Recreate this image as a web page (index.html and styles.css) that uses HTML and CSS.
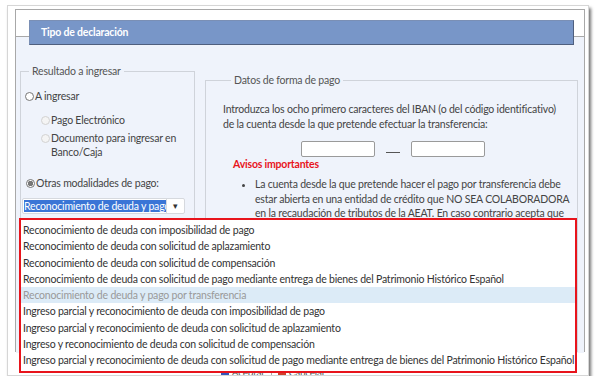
FILE: index.html
```html
<!DOCTYPE html>
<html lang="es">
<head>
    <meta charset="UTF-8">
    <meta name="viewport" content="width=device-width, initial-scale=1.0">
    <title>Tipo de declaración</title>
    <link rel="stylesheet" href="styles.css">
</head>
<body>

    <div class="window">
        <div class="frame">
            <div class="header_bar">Tipo de declaración</div>

            <div class="content">
                <!-- Resultado -->
                <fieldset class="box box-left">
                    <legend>Resultado a ingresar</legend>

                    <label class="opt opt-first"><span class="radio"></span>A ingresar</label>
                    <label class="opt opt-sub opt-pago"><span class="radio radio-off"></span>Pago Electrónico</label>
                    <label class="opt opt-sub opt-doc"><span class="radio radio-off"></span>Documento para ingresar en Banco/Caja</label>
                    <label class="opt opt-otras"><span class="radio radio-on"></span>Otras modalidades de pago:</label>

                    <div class="select">
                        <span class="select-text"><span class="sel-hl">Reconocimiento de deuda y pago por transferencia</span></span>
                        <span class="select-btn">&#9662;</span>
                    </div>
                </fieldset>

                <!-- Forma de pago -->
                <fieldset class="box box-right">
                    <legend>Datos de forma de pago</legend>

                    <p class="intro">Introduzca los ocho primero caracteres del IBAN (o del código identificativo) de la cuenta desde la que pretende efectuar la transferencia:</p>

                    <div class="iban-row">
                        <span class="iban-input"></span>
                        <span class="iban-dash"></span>
                        <span class="iban-input"></span>
                    </div>

                    <h4 class="avisos">Avisos importantes</h4>
                    <ul class="avisos-list">
                        <li>La cuenta desde la que pretende hacer el pago por transferencia debe<br>
                            estar abierta en una entidad de crédito que NO SEA COLABORADORA<br>
                            en la recaudación de tributos de la AEAT. En caso contrario acepta que<br>
                            el pago se realice mediante adeudo en cuenta.</li>
                    </ul>
                </fieldset>
            </div>
        </div>

        <div class="footer">
            <span class="btn"><span class="btn-icon icon-ok"></span>Aceptar</span>
            <span class="btn-sep"></span>
            <span class="btn"><span class="btn-icon icon-cancel"></span>Cancelar</span>
        </div>

        <!-- opened list of the select -->
        <ul class="dropdown">
            <li>Reconocimiento de deuda con imposibilidad de pago</li>
            <li>Reconocimiento de deuda con solicitud de aplazamiento</li>
            <li>Reconocimiento de deuda con solicitud de compensación</li>
            <li>Reconocimiento de deuda con solicitud de pago mediante entrega de bienes del Patrimonio Histórico Español</li>
            <li class="current">Reconocimiento de deuda y pago por transferencia</li>
            <li>Ingreso parcial y reconocimiento de deuda con imposibilidad de pago</li>
            <li>Ingreso parcial y reconocimiento de deuda con solicitud de aplazamiento</li>
            <li>Ingreso y reconocimiento de deuda con solicitud de compensación</li>
            <li>Ingreso parcial y reconocimiento de deuda con solicitud de pago mediante entrega de bienes del Patrimonio Histórico Español</li>
        </ul>
    </div>

</body>
</html>
```

FILE: styles.css
```css
body {
    margin: 0;
    background-color: #fff;
    font-family: 'Lato', 'Open Sans', sans-serif;
    font-size: 10.5px;
    letter-spacing: -0.2px;
    color: #444;
}

.window {
    position: relative;
    width: 580px;
    height: 369px;
    margin: 5px 0 0 7px;
    border: 1px solid #d6d6d6;
    background-color: #fff;
    box-shadow: 2px 3px 3px rgba(0, 0, 0, 0.55);
    overflow: hidden;
}

.frame {
    margin: 3px 3px 0 7px;
    height: 343px;
    border: 1px solid #a8a8a8;
    background-color: #fff;
    padding-top: 10px;
    box-sizing: border-box;
}

.header_bar {
    position: relative;
    z-index: 1;
    height: 25px;
    margin: 0 10px -9px 13px;
    padding-left: 11px;
    box-sizing: border-box;
    background-color: #7896c8;
    border: 1px solid #7a8fb5;
    border-right-color: #4f5f7e;
    border-bottom-color: #4f5f7e;
    color: #fff;
    font-weight: bold;
    line-height: 23px;
}

.content {
    display: grid;
    grid-template-columns: 175px 373px;
    column-gap: 10px;
    align-items: start;
    height: 316px;
    padding: 0 0 0 4px;
    border-top: 1px solid #a8a8a8;
    background-color: #eff3fb;
}

/* fieldsets */
.box {
    margin: 0;
    padding: 0;
    border: 1px solid #cfd3da;
    min-width: 0;
}

.box legend {
    padding: 0 3px;
    margin-left: 8px;
    line-height: 16px;
    color: #555;
}

.box-left {
    margin-top: 26px;
    height: 282px;
    box-sizing: border-box;
}

.box-right {
    margin-top: 35px;
    height: 280px;
    box-sizing: border-box;
    padding: 0 8px 0 17px;
}

/* radios */
.opt {
    display: flex;
    align-items: flex-start;
    line-height: 16px;
    color: #444;
}

.radio {
    flex: none;
    width: 7px;
    height: 7px;
    margin: 4px 1px 0 0;
    border: 1px solid #777;
    border-radius: 50%;
    background-color: #fff;
}

.radio-off {
    border-color: #d2d2d2;
    background-color: #f4f4f4;
}

.radio-on {
    background: radial-gradient(circle, #777 0 2.5px, #fff 3px);
}

.opt-first {
    margin: 9px 0 0 4px;
}

.opt-sub {
    margin-left: 20px;
}

.opt-pago {
    margin-top: 8px;
}

.opt-doc {
    margin-top: 3px;
    line-height: 14px;
    width: 140px;
}

.opt-doc .radio {
    margin-top: 3px;
}

.opt-otras {
    margin: 16px 0 0 5px;
}

.select {
    display: flex;
    height: 16px;
    margin: 7px 0 0 1px;
    width: 163px;
    border: 1px solid #d6d9de;
    border-radius: 2px;
    background-color: #fff;
    box-sizing: border-box;
    overflow: hidden;
}

.select-text {
    flex: 1;
    overflow: hidden;
    white-space: nowrap;
    padding-left: 1px;
    line-height: 14px;
}

.sel-hl {
    background-color: #3a75d6;
    color: #fff;
}

.select-btn {
    flex: none;
    width: 17px;
    border-left: 1px solid #d6d9de;
    text-align: center;
    font-size: 9px;
    line-height: 14px;
    color: #333;
}

/* right column */
.intro {
    margin: 14px 0 0;
    line-height: 15px;
    color: #444;
}

.iban-row {
    display: flex;
    justify-content: center;
    align-items: flex-end;
    gap: 11px;
    margin-top: 9px;
    padding-right: 6px;
}

.iban-input {
    width: 74px;
    height: 16px;
    box-sizing: border-box;
    border: 1px solid #9a9a9a;
    border-radius: 2px;
    background-color: #fff;
}

.iban-dash {
    width: 14px;
    margin-bottom: 4px;
    border-bottom: 1px solid #555;
}

.avisos {
    margin: 0 0 0 10px;
    line-height: 14px;
    font-size: 10.5px;
    color: #e8141c;
}

.avisos-list {
    margin: 6px 0 0;
    padding-left: 32px;
    line-height: 14.5px;
    white-space: nowrap;
    color: #444;
}

/* footer buttons (mostly covered by the open list) */
.footer {
    display: flex;
    justify-content: center;
    align-items: center;
    gap: 6px;
    padding-top: 14px;
    padding-right: 50px;
    font-size: 10px;
    color: #555;
}

.btn {
    display: flex;
    align-items: center;
    gap: 3px;
}

.btn-icon {
    width: 8px;
    height: 8px;
}

.icon-ok {
    background-color: #3656b8;
}

.icon-cancel {
    background-color: #d0402c;
}

.btn-sep {
    width: 1px;
    height: 12px;
    background-color: #aaa;
}

/* open select list */
.dropdown {
    position: absolute;
    left: 11px;
    top: 212px;
    width: 554px;
    height: 149px;
    margin: 0;
    padding: 2px 0 0;
    list-style: none;
    border: 2px solid #e8141c;
    background-color: #fff;
    box-sizing: content-box;
}

.dropdown li {
    padding-left: 2px;
    line-height: 16.25px;
    white-space: nowrap;
    color: #333;
}

.dropdown .current {
    background-color: #dcebf7;
    color: #999;
}
```
